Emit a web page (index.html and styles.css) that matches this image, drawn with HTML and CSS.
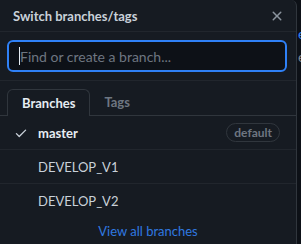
FILE: index.html
```html
<!doctype html>
<html>
  <head>
    <title>Switch branches/tags</title>
    <meta name="viewport" content="width=device-width, initial-scale=1.0" />
    <link rel="stylesheet" href="styles.css">
  </head>
  <body>
    <div class="menu">
      <div class="menu-header">
        <span class="menu-title">Switch branches/tags</span>
        <svg class="close" viewBox="0 0 16 16" width="16" height="16">
          <path d="M3.72 3.72a.75.75 0 0 1 1.06 0L8 6.94l3.22-3.22a.749.749 0 0 1 1.06 1.06L9.06 8l3.220 3.22a.749.749 0 0 1-1.06 1.06L8 9.06l-3.22 3.22a.749.749 0 0 1-1.06-1.06L6.94 8 3.72 4.78a.75.75 0 0 1 0-1.06Z" fill="currentColor"/>
        </svg>
      </div>
      <div class="filter">
        <div class="filter-input">
          <span class="caret"></span>
          <span class="placeholder">Find or create a branch...</span>
        </div>
      </div>
      <div class="tabs">
        <span class="tab selected">Branches</span>
        <span class="tab">Tags</span>
      </div>
      <div class="list">
        <div class="item">
          <svg class="check" viewBox="0 0 16 16" width="14" height="14">
            <path d="M13.78 4.22a.75.75 0 0 1 0 1.06l-7.25 7.25a.75.75 0 0 1-1.06 0L2.22 9.28a.751.751 0 0 1 .018-1.042.751.751 0 0 1 1.042-.018L6 10.94l6.72-6.72a.75.75 0 0 1 1.06 0Z" fill="currentColor"/>
          </svg>
          <span class="name current">master</span>
          <span class="label">default</span>
        </div>
        <div class="item">
          <span class="name">DEVELOP_V1</span>
        </div>
        <div class="item last">
          <span class="name">DEVELOP_V2</span>
        </div>
      </div>
      <div class="footer">
        <a href="#" class="view-all">View all branches</a>
      </div>
    </div>
    <div class="page-edge">
      <span class="frag frag-a">e</span>
      <span class="frag frag-b">e</span>
    </div>
  </body>
</html>
```

FILE: styles.css
```css
body {
  margin: 0;
  background: #0d1117;
  font-family: Lato, sans-serif;
  font-size: 13px;
  color: #e6edf3;
  display: flex;
  height: 244px;
  overflow: hidden;
}
.menu {
  width: 296px;
  flex: none;
  background: #161b22;
  border-right: 1px solid #30363d;
  border-top-right-radius: 6px;
  display: flex;
  flex-direction: column;
}
.menu-header {
  height: 31px;
  display: flex;
  align-items: center;
  justify-content: space-between;
  padding: 0 11px 0 13px;
  border-bottom: 1px solid #21262d;
}
.menu-title {
  font-weight: 700;
  color: #c9d1d9;
}
.close {
  color: #8b949e;
}
.filter {
  padding: 8px 9px 8px 7px;
  border-bottom: 1px solid #21262d;
}
.filter-input {
  height: 28px;
  border: 2px solid #2f81f7;
  border-radius: 6px;
  background: #0d1117;
  display: flex;
  align-items: center;
  padding-left: 10px;
}
.caret {
  width: 1px;
  height: 18px;
  background: #e6edf3;
}
.placeholder {
  color: #6e7681;
  font-size: 14px;
}
.tabs {
  display: flex;
  padding: 8px 0 0 7px;
  border-bottom: 1px solid #30363d;
  height: 26px;
}
.tab {
  padding: 0 14px;
  font-weight: 700;
  color: #6e7681;
  line-height: 26px;
  margin-bottom: -1px;
}
.tab.selected {
  color: #e6edf3;
  background: #161b22;
  border: 1px solid #30363d;
  border-bottom: 0;
  border-radius: 6px 6px 0 0;
  height: 26px;
}
.item {
  height: 33px;
  display: flex;
  align-items: center;
  padding-left: 38px;
  padding-right: 16px;
  border-bottom: 1px solid #21262d;
  position: relative;
  color: #c9d1d9;
}
.item.last {
  border-bottom: 0;
}
.check {
  position: absolute;
  left: 14px;
  color: #c9d1d9;
}
.name.current {
  font-weight: 700;
  color: #e6edf3;
}
.label {
  margin-left: auto;
  border: 1px solid #30363d;
  border-radius: 10px;
  padding: 0 7px;
  line-height: 17px;
  font-size: 12px;
  font-weight: 700;
  color: #6e7681;
}
.footer {
  text-align: center;
  padding-top: 6px;
}
.view-all {
  color: #3079e0;
  text-decoration: none;
}
.page-edge {
  flex: 1;
  position: relative;
}
.frag {
  position: absolute;
  left: 1px;
  font-size: 14px;
}
.frag-a {
  top: 25px;
  color: #2f81f7;
}
.frag-b {
  top: 48px;
  color: #7d8590;
}
```
